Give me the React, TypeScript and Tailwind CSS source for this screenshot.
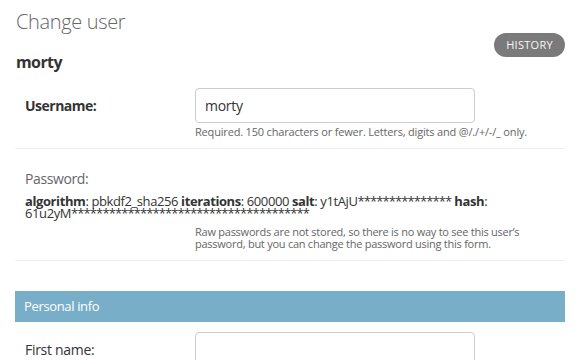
const hashStars = "*".repeat(38);
const saltStars = "*".repeat(15);

export default function App() {
  return (
    <main className="min-h-screen bg-white pl-[15px] pr-[14px] font-['Open_Sans','Noto_Sans',sans-serif] text-[#333]">
      <div className="flex items-start justify-between">
        <div className="pl-px">
          <h1 className="mt-[10px] text-[20px] leading-[24px] font-light tracking-[-0.35px] text-[#666]">
            Change user
          </h1>
          <h2 className="mt-[18px] text-[16px] leading-[20px] font-bold tracking-[-0.6px] text-[#333]">
            morty
          </h2>
        </div>
        <button className="mt-[33px] h-[24px] rounded-full bg-[#7a7a7a] px-[12px] text-[11px] leading-[24px] tracking-[0.3px] text-[#f6f6f6]">
          HISTORY
        </button>
      </div>

      <fieldset className="mt-[6px]">
        <div className="flex border-b border-[#eee] py-[10px] pl-[10px]">
          <label className="flex h-[35px] w-[170px] items-center text-[14px] font-bold tracking-[-0.5px]">
            Username:
          </label>
          <div>
            <input
              defaultValue="morty"
              className="h-[35px] w-[280px] rounded-[4px] border border-[#ccc] px-[9px] text-[14px] tracking-[-0.3px] text-[#333] outline-none"
            />
            <p className="mt-[2px] text-[11px] leading-[13px] tracking-[-0.18px] text-[#666]">
              Required. 150 characters or fewer. Letters, digits and @/./+/-/_ only.
            </p>
          </div>
        </div>

        <div className="border-b border-[#eee] py-[10px] pl-[10px]">
          <label className="block pt-[10px] text-[14px] leading-[20px] tracking-[-0.4px] text-[#666]">
            Password:
          </label>
          <div className="mt-[6px] text-[13px] leading-[12px] tracking-[-0.4px] text-[#333]">
            <b>algorithm</b>: pbkdf2_sha256 <b>iterations</b>: 600000 <b>salt</b>: y1tAjU
            <span className="tracking-[-0.9px]">{saltStars}</span> <b>hash</b>: 61u2yM
            <span className="tracking-[-0.9px]">{hashStars}</span>
          </div>
          <p className="mt-[7px] ml-[170px] text-[11px] leading-[12px] tracking-[-0.25px] text-[#666]">
            Raw passwords are not stored, so there is no way to see this user’s
            password, but you can change the password using this form.
          </p>
        </div>
      </fieldset>

      <fieldset className="mt-[30px]">
        <h2 className="h-[31px] bg-[#79aec8] px-[9px] text-[13px] leading-[31px] tracking-[-0.35px] text-white">
          Personal info
        </h2>
        <div className="flex py-[10px] pl-[10px]">
          <label className="flex h-[35px] w-[170px] items-center text-[14px] tracking-[-0.3px]">
            First name:
          </label>
          <input className="h-[35px] w-[280px] rounded-[4px] border border-[#ccc] px-[9px] text-[14px] outline-none" />
        </div>
      </fieldset>
    </main>
  );
}
